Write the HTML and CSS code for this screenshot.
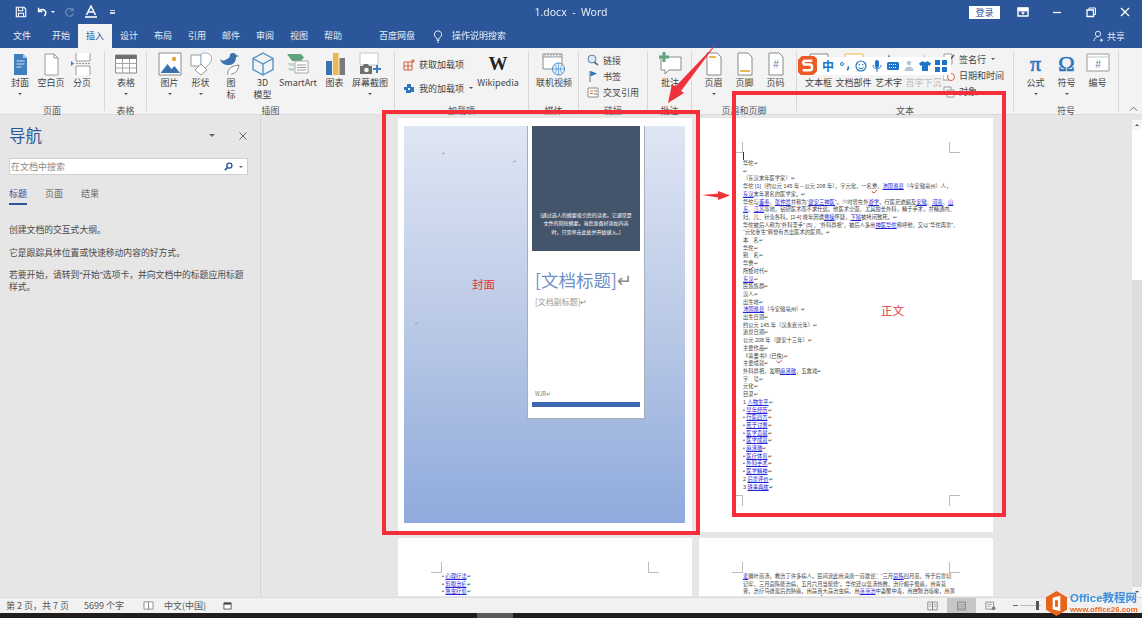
FILE: index.html
```html
<!DOCTYPE html>
<html lang="zh-CN">
<head>
<meta charset="utf-8">
<title>1.docx - Word</title>
<link rel="stylesheet" href="styles.css">
</head>
<body>
<div class="app">
  <header class="titlebar">
    <div class="qat">
      <svg class="qi" viewBox="0 0 14 14"><path d="M1.5 1.5h9l2 2v9h-11z" fill="none" stroke="#fff" stroke-width="1.3"/><path d="M4 2v3.5h5V2M4 12.5V8.500h6v4" fill="none" stroke="#fff" stroke-width="1.2"/></svg>
      <svg class="qi undo" viewBox="0 0 14 14"><path d="M3 2v4.5h4.5M3.2 6.3C5 3.800 8.500 3.400 10.500 5.500c1.600 1.800 1.200 4.500-1 6" fill="none" stroke="#fff" stroke-width="1.7"/></svg>
      <span class="qcaret"></span>
      <svg class="qi redo" viewBox="0 0 14 14"><path d="M11 3.500A5 5 0 1 0 12 8M11.500 1v3.500H8" fill="none" stroke="#6f8cba" stroke-width="1.5"/></svg>
      <svg class="qi font" viewBox="0 0 14 14"><path d="M2.500 10L7 1l4.500 9M4.300 7h5.400" fill="none" stroke="#fff" stroke-width="1.5"/><path d="M1 12h12" stroke="#fff" stroke-width="1.6"/></svg>
      <span class="qmore"></span>
    </div>
    <div class="doc-title">1.docx&nbsp; -&nbsp; Word</div>
    <div class="winctl">
      <span class="login">登录</span>
      <svg class="wi" viewBox="0 0 12 12"><path d="M1 2h10v8H1z" fill="none" stroke="#fff" stroke-width="1.4"/><path d="M1 2h10v3H1zM6 4v4M4.300 6.500L6 8.300l1.700-1.800" fill="#fff" stroke="#fff" stroke-width=".8"/></svg>
      <svg class="wi" viewBox="0 0 12 12"><path d="M2 6.500h8" stroke="#fff" stroke-width="1.3"/></svg>
      <svg class="wi" viewBox="0 0 12 12"><path d="M2 4h6.500v6.500H2z" fill="none" stroke="#fff" stroke-width="1.3"/><path d="M4 3.500V2h6.500v6.500H9" fill="none" stroke="#fff" stroke-width="1"/></svg>
      <svg class="wi" viewBox="0 0 12 12"><path d="M2 2l8 8M10 2l-8 8" stroke="#fff" stroke-width="1.3"/></svg>
    </div>
  </header>

  <nav class="tabs">
    <span class="tab first">文件</span><span class="tab">开始</span><span class="tab active">插入</span><span class="tab">设计</span><span class="tab">布局</span><span class="tab">引用</span><span class="tab">邮件</span><span class="tab">审阅</span><span class="tab">视图</span><span class="tab">帮助</span>
    <span class="tab baidu">百度网盘</span>
    <svg class="bulb" viewBox="0 0 12 16"><path d="M6 1a4.500 4.500 0 0 0-2.400 8.300c.6.500.9 1.200.9 2h3c0-.8.300-1.500.9-2A4.500 4.500 0 0 0 6 1zM4.500 13h3M5 15h2" fill="none" stroke="#fff" stroke-width="1.1"/></svg>
    <span class="tab search">操作说明搜索</span>
    <span class="share">
      <svg class="share-i" viewBox="0 0 12 14"><circle cx="6" cy="4.500" r="3.200" fill="none" stroke="#fff" stroke-width="1"/><path d="M1 13c.5-3 2.200-4.600 4.500-5M8 12h4M10 10v4" fill="none" stroke="#fff" stroke-width="1"/></svg>共享
    </span>
  </nav>

  <section class="ribbon">
    <div class="group g1">
      <div class="gbody">
        <div class="item w30"><svg class="ico" viewBox="0 0 24 24"><path d="M6 2h9l4 4v17H6z" fill="#3e7fc1"/><path d="M15 2v4h4" fill="#a9c8e8"/><path d="M8.500 9h8M8.500 12h8M8.500 15h5" stroke="#cfe0f2" stroke-width="1"/></svg><span>封面</span><i class="caret"></i></div>
        <div class="item w32"><svg class="ico" viewBox="0 0 24 24"><path d="M6 2h9l4 4v17H6z" fill="#fff" stroke="#9a9a9a"/><path d="M15 2v4h4" fill="none" stroke="#9a9a9a"/></svg><span>空白页</span></div>
        <div class="item w30"><svg class="ico" viewBox="0 0 24 24"><path d="M6 1v8h14V1M6 23v-9h14v9" fill="#fff" stroke="#9a9a9a"/><path d="M1 9l3 2.500L1 14z" fill="#3e7fc1"/><path d="M6 11.500h14" stroke="#9a9a9a" stroke-dasharray="2 1"/></svg><span>分页</span></div>
      </div>
      <div class="glabel">页面</div>
    </div>
    <div class="group g2">
      <div class="gbody">
        <div class="item w42"><svg class="ico" viewBox="0 0 24 24"><path d="M1.500 3h21v18h-21z" fill="#fff" stroke="#8a8a8a"/><path d="M1.500 3h21v4h-21z" fill="#6f6f6f"/><path d="M1.500 11.500h21M1.500 16h21M8.500 7v14M15.500 7v14" stroke="#a8a8a8"/></svg><span>表格</span><i class="caret"></i></div>
      </div>
      <div class="glabel">表格</div>
    </div>
    <div class="group g3">
      <div class="gbody">
        <div class="item w31"><svg class="ico" viewBox="0 0 24 24"><path d="M1 1h22v22H1z" fill="#fff" stroke="#8a8a8a"/><path d="M2.500 21l7-9 4 5 3-3 5.500 7z" fill="#3a72ad"/><circle cx="16" cy="7" r="2.200" fill="#e9a23b"/></svg><span>图片</span><i class="caret"></i></div>
        <div class="item w31"><svg class="ico" viewBox="0 0 24 24"><path d="M2 3h10v11H2z" fill="#fff" stroke="#9a9a9a"/><path d="M12 2c3-2 8-1 10 2 2 4-1 8-6 12l-4-3z" fill="#fff" stroke="#8fb2d4"/><path d="M12 12l6 6-6 5-6-5z" fill="#fff" stroke="#9a9a9a"/></svg><span>形状</span><i class="caret"></i></div>
        <div class="item w30"><svg class="ico" viewBox="0 0 24 24"><path d="M1 7c3 3 5 1 7 0 2-1 3-2 3-4 0-2 5-3 6 0l3 1-3 1c0 5-3 8-7 8-5 0-8-2-9-6z" fill="#3a72ad"/><path d="M9 23c-1-4 1-9 11-10-1 6-4 9-8 9" fill="#fff" stroke="#8a8a8a"/></svg><span>图<br>标</span></div>
        <div class="item w33"><svg class="ico" viewBox="0 0 24 24"><path d="M12 1l10 5.500v11L12 23 2 17.500v-11zM2 6.500L12 12l10-5.500M12 12v11" fill="none" stroke="#4a90c8" stroke-width="1.3"/></svg><span>3D<br>模型</span></div>
        <div class="item w38"><svg class="ico" viewBox="0 0 24 24"><path d="M1 2h14l3 3.500-3 3.500H6z" fill="#5ea57e"/><path d="M9 9h13v12H9z" fill="#fff" stroke="#a8a8a8"/><path d="M11 13h9M11 15.500h9M11 18h9" stroke="#9a9a9a"/><path d="M1 11h7v3H4zM1 16h7v3H4z" fill="#bcd8c8"/></svg><span>SmartArt</span></div>
        <div class="item w35"><svg class="ico" viewBox="0 0 24 24"><path d="M3 9h6v14H3z" fill="#3a72ad"/><path d="M10 1h5.500v22H10z" fill="#e9b84f"/><path d="M16.500 6H22v17h-5.500z" fill="#7a7a7a"/></svg><span>图表</span></div>
        <div class="item w36"><svg class="ico" viewBox="0 0 24 24"><path d="M2 1h18v12H2z" fill="#fff" stroke="#c8c8c8"/><path d="M2 14h3l1-2h4l1 2h3v8H2z" fill="#6f6f6f"/><circle cx="8.500" cy="18" r="2.300" fill="#f3f3f3"/><path d="M19 13v8M15 17h8" stroke="#3e7fc1" stroke-width="2"/></svg><span>屏幕截图</span><i class="caret"></i></div>
      </div>
      <div class="glabel">插图</div>
    </div>
    <div class="group g4">
      <div class="gbody addins">
        <div class="rows">
          <div class="row tall"><svg class="sico" viewBox="0 0 12 12"><path d="M1 3h8v8H1zM1 7h8M5 3v8" fill="none" stroke="#d2603a" stroke-width="1"/><path d="M10 0v4M8 2h4" stroke="#d2603a" stroke-width="1"/></svg><span>获取加载项</span></div>
          <div class="row tall"><svg class="sico" viewBox="0 0 12 12"><path d="M1 5h4v3H1zM4 2h4v4H4zM7 5h4v5H7zM3 8h5v3H3z" fill="#2f74bd"/></svg><span>我的加载项</span><i class="caret inline"></i></div>
        </div>
        <div class="item wiki"><span class="w-logo">W</span><span>Wikipedia</span></div>
      </div>
      <div class="glabel">加载项</div>
    </div>
    <div class="group g5">
      <div class="gbody">
        <div class="item w50"><svg class="ico" viewBox="0 0 24 24"><path d="M1 2h19v15H1z" fill="#fff" stroke="#8a8a8a"/><path d="M1 5h19M3 2v3M6 2v3M9 2v3M12 2v3M15 2v3M18 2v3" stroke="#8a8a8a" stroke-width=".8"/><circle cx="16.500" cy="17" r="6" fill="#eaf2fa" stroke="#4a90c8"/><path d="M10.500 17h12M16.500 11v12M13 12.500c2 3 2 6 0 9M20 12.500c-2 3-2 6 0 9" fill="none" stroke="#4a90c8" stroke-width=".7"/></svg><span>联机视频</span></div>
      </div>
      <div class="glabel">媒体</div>
    </div>
    <div class="group g6">
      <div class="gbody">
        <div class="rows links">
          <div class="row"><svg class="sico" viewBox="0 0 12 12"><circle cx="5" cy="5" r="4" fill="#dce8f4" stroke="#5a86b0"/><path d="M7 8l4 3" stroke="#6f6f6f" stroke-width="1.6"/></svg><span>链接</span></div>
          <div class="row"><svg class="sico" viewBox="0 0 12 12"><path d="M3 1v11" stroke="#6f6f6f"/><path d="M3.500 1L10 3.500 3.500 6.500z" fill="#2f74bd"/></svg><span>书签</span></div>
          <div class="row"><svg class="sico" viewBox="0 0 12 12"><path d="M1 2h10v9H1z" fill="#fff" stroke="#8a8a8a"/><path d="M3 5h3M3 7.500h3" stroke="#d2603a"/><path d="M7 5h3M7 8h3" stroke="#6f6f6f"/></svg><span>交叉引用</span></div>
        </div>
      </div>
      <div class="glabel">链接</div>
    </div>
    <div class="group g7">
      <div class="gbody">
        <div class="item w44"><svg class="ico" viewBox="0 0 24 24"><path d="M3 5h20v13H11l-4 4v-4H3z" fill="#fff" stroke="#8a8a8a"/><path d="M1 5h10M6 0v10" stroke="#5ea57e" stroke-width="3"/></svg><span>批注</span></div>
      </div>
      <div class="glabel">批注</div>
    </div>
    <div class="group g8">
      <div class="gbody">
        <div class="item w31"><svg class="ico" viewBox="0 0 24 24"><path d="M5 1h10l4 4v18H5z" fill="#fff" stroke="#8a8a8a"/><path d="M7 5h7" stroke="#e9b84f" stroke-width="2"/></svg><span>页眉</span><i class="caret"></i></div>
        <div class="item w31"><svg class="ico" viewBox="0 0 24 24"><path d="M5 1h10l4 4v18H5z" fill="#fff" stroke="#8a8a8a"/><path d="M7 19h10" stroke="#e9b84f" stroke-width="2"/></svg><span>页脚</span><i class="caret"></i></div>
        <div class="item w31"><svg class="ico" viewBox="0 0 24 24"><path d="M5 1h10l4 4v18H5z" fill="#fff" stroke="#8a8a8a"/><text x="12" y="16" class="hash">#</text></svg><span>页码</span><i class="caret"></i></div>
      </div>
      <div class="glabel">页眉和页脚</div>
    </div>
    <div class="group g9">
      <div class="gbody">
        <div class="item w35"><svg class="ico" viewBox="0 0 24 24"><path d="M3 2h18v20H3z" fill="#fff" stroke="#8a8a8a"/></svg><span>文本框</span><i class="caret"></i></div>
        <div class="item w35"><svg class="ico" viewBox="0 0 24 24"><path d="M3 2h18v20H3z" fill="#fff" stroke="#e9b84f"/></svg><span>文档部件</span><i class="caret"></i></div>
        <div class="item w35"><svg class="ico" viewBox="0 0 24 24"><path d="M8 14L12 2l4 12z" fill="#3e7fc1"/></svg><span>艺术字</span><i class="caret"></i></div>
        <div class="item w35 muted"><svg class="ico" viewBox="0 0 24 24"><path d="M8 14L12 2l4 12z" fill="#c8c8c8"/></svg><span>首字下沉</span><i class="caret"></i></div>
        <div class="rows sign">
          <div class="row"><svg class="sico" viewBox="0 0 12 12"><path d="M1 1h8v10H1z" fill="#fff" stroke="#9a9a9a"/><path d="M5 9L11 2" stroke="#555" stroke-width="1.3"/></svg><span>签名行</span><i class="caret inline"></i></div>
          <div class="row"><svg class="sico" viewBox="0 0 12 12"><path d="M0 4h8v7H0z" fill="#fff" stroke="#9a9a9a"/><circle cx="8" cy="8" r="3.500" fill="#fff" stroke="#d2603a"/></svg><span>日期和时间</span></div>
          <div class="row"><svg class="sico" viewBox="0 0 12 12"><path d="M1 1h7v7H1z" fill="#fff" stroke="#9a9a9a"/><path d="M4 4h7v7H4z" fill="#fff" stroke="#9a9a9a"/></svg><span>对象</span><i class="caret inline"></i></div>
        </div>
      </div>
      <div class="glabel">文本</div>
    </div>
    <div class="group g10">
      <div class="gbody">
        <div class="item w31"><span class="big-sym">π</span><span>公式</span><i class="caret"></i></div>
        <div class="item w31"><span class="big-sym">Ω</span><span>符号</span><i class="caret"></i></div>
        <div class="item w31"><svg class="ico" viewBox="0 0 24 24"><path d="M1 2h22v17H1z" fill="#fff" stroke="#9a9a9a"/><path d="M1 5h22" stroke="#c8c8c8"/><text x="12" y="16" class="hash">#</text></svg><span>编号</span></div>
      </div>
      <div class="glabel">符号</div>
    </div>
    <div class="collapse"><svg viewBox="0 0 10 6"><path d="M1 5l4-4 4 4" fill="none" stroke="#666" stroke-width="1"/></svg></div>
  </section>

  <main class="workspace">
    <aside class="navpane">
      <div class="nav-head"><h2>导航</h2><i class="nav-caret"></i><svg class="nav-x" viewBox="0 0 8 8"><path d="M.5.500l7 7M7.500.500l-7 7" stroke="#666" stroke-width="1"/></svg></div>
      <div class="nav-search"><span>在文档中搜索</span><svg class="nav-mag" viewBox="0 0 10 10"><circle cx="6" cy="4" r="2.800" fill="none" stroke="#2b579a" stroke-width="1.5"/><path d="M4 6L1 9" stroke="#2b579a" stroke-width="1.8"/></svg><i class="tiny-caret"></i></div>
      <div class="nav-tabs"><span class="on">标题</span><span>页面</span><span>结果</span></div>
      <p>创建文档的交互式大纲。</p>
      <p>它是跟踪具体位置或快速移动内容的好方式。</p>
      <p>若要开始，请转到“开始”选项卡，并向文档中的标题应用标题样式。</p>
    </aside>
    <div class="docarea">
      <div class="pages">
        <article class="page cover">
          <div class="cover-bg">
            <i class="speck s1"></i><i class="speck s2"></i><i class="speck s3"></i>
            <div class="cover-card">
              <div class="cover-dark"><p>[通过选人的摘要吸引您的读者。它通常是文件的简短摘要。当您准备好添加内容时，只需单击此处并开始键入。]</p></div>
              <div class="cover-title">[文档标题]<em>↵</em></div>
              <div class="cover-sub">[文档副标题]<em>↵</em></div>
              <div class="cover-foot">
                <div class="cover-author">WJR↵</div>
                <div class="cover-bar"></div>
              </div>
            </div>
          </div>
        </article>
        <article class="page body-page">
          <i class="mark tl"></i><i class="mark tr"></i><i class="mark bl"></i><i class="mark br"></i>
          <div class="text">
            <div class="cursor"></div>
            <div>华佗↵</div>
            <div>↵</div>
            <div>（东汉末年医学家）↵</div>
            <div>华佗 [1]（约公元 145 年－公元 208 年），字元化，一名<u class="err">旉</u>，<a>沛国谯县</a>（今安徽亳州）人，</div>
            <div><a>东汉</a>末年著名的医学家。↵</div>
            <div>华佗与<a>董奉</a>、<a>张仲景</a>并称为“<a>建安三神医</a>”。少时曾在外<a>游学</a>，行医足迹遍及<a>安徽</a>、<a>河南</a>、<a>山</a></div>
            <div><a>东</a>、<a>江苏</a>等地，钻研医术而不求仕途。他医术全面，尤其擅长外科，精于手术，并精通内、</div>
            <div>妇、儿、针灸各科。[2-4] 晚年因遭<a>曹操</a>怀疑，<a>下狱</a>被拷问致死。↵</div>
            <div>华佗被后人称为“外科圣手” [5] 、“外科鼻祖”，被后人多用<a>神医华佗</a>称呼他，又以“华佗再世”、</div>
            <div>“元化重生”称誉有杰出医术的医师。↵</div>
            <div>本　名↵</div>
            <div>华佗↵</div>
            <div>别　名↵</div>
            <div>华<u class="err">旉</u>↵</div>
            <div>所处时代↵</div>
            <div><a>东汉</a>↵</div>
            <div>民族族群↵</div>
            <div>汉人↵</div>
            <div>出生地↵</div>
            <div><a>沛国谯县</a>（今安徽亳州）↵</div>
            <div>出生日期↵</div>
            <div>约公元 145 年（汉永嘉元年）↵</div>
            <div>逝世日期↵</div>
            <div>公元 208 年（建安十三年）↵</div>
            <div>主要作品↵</div>
            <div>《青囊书》(已<u class="err">佚</u>)↵</div>
            <div>主要成就↵</div>
            <div>外科鼻祖，发明<a>麻沸散</a>，五禽戏↵</div>
            <div>字　号↵</div>
            <div>元化↵</div>
            <div>目录↵</div>
            <div class="li">1 <a>人物生平</a>↵</div>
            <div class="li">• <a>早年经历</a>↵</div>
            <div class="li">• <a>行医四方</a>↵</div>
            <div class="li">• <a>死于讨曹</a>↵</div>
            <div class="li">• <a>医学贡献</a>↵</div>
            <div class="li">• <a>医学成就</a>↵</div>
            <div class="li">• <a>麻沸散</a>↵</div>
            <div class="li">• <a>医疗体育</a>↵</div>
            <div class="li">• <a>外科手术</a>↵</div>
            <div class="li">• <a>医学精神</a>↵</div>
            <div class="li">2 <a>后世评价</a>↵</div>
            <div class="li">3 <a>轶事典故</a>↵</div>
          </div>
        </article>
        <article class="page lower">
          <i class="mark tl"></i><i class="mark tr"></i>
          <div class="text">
            <div class="li">• <a>心理疗法</a>↵</div>
            <div class="li">• <a>剪眼治疟</a>↵</div>
            <div class="li">• <a>熟虫疗愈</a>↵</div>
          </div>
        </article>
        <article class="page lower">
          <i class="mark tl"></i><i class="mark tr"></i>
          <div class="text">
            <div><a>麦</a>嫩叶煎汤，救治了许多病人。民间流此用清唐一首歌谣：“三月<a>茵陈</a>四月蒿，传于后世切</div>
            <div>记牢，三月茵陈能治病，五月六月当柴烧”。华佗还以温汤热敷，治疗蝎子<u class="err">螫</u>痛，用青苔</div>
            <div>膏，治疗马蜂蜇后的肿痛，用蒜<u class="err">苗</u>大蒜治虫病，用<a>蒸蒸治</a>中蛊蟹中毒，用白前治咳嗽，用黄</div>
          </div>
        </article>
      </div>
      <div class="scrollbar"><span class="sb-up"></span><span class="sb-thumb"></span><span class="sb-down"></span></div>
    </div>
  </main>

  <footer class="status">
    <span class="st pagecount">第 2 页，共 7 页</span>
    <span class="st">5699 个字</span>
    <svg class="st-i book" viewBox="0 0 12 10"><path d="M1 1h5v8H1zM6 1h5v8H6z" fill="#fff" stroke="#888"/></svg>
    <span class="st">中文(中国)</span>
    <svg class="st-i cal" viewBox="0 0 10 10"><path d="M1 2h8v7H1z" fill="#fff" stroke="#555"/><path d="M1 2h8v2H1z" fill="#444"/></svg>
    <div class="views">
      <svg class="v-i" viewBox="0 0 14 12"><path d="M1 1h6v10H1zM7 1h6v10H7z" fill="none" stroke="#7a7a7a"/><path d="M2.500 4h3M2.500 6.500h3M8.500 4h3M8.500 6.500h3" stroke="#9a9a9a"/></svg>
      <span class="v-on"><svg class="v-i" viewBox="0 0 14 12"><path d="M2 1h10v10H2z" fill="none" stroke="#7a7a7a"/><path d="M2 4h10M2 6.500h10M2 9h10" stroke="#9a9a9a"/></svg></span>
      <svg class="v-i" viewBox="0 0 14 12"><path d="M1 1h10v9H1z" fill="none" stroke="#7a7a7a"/><path d="M3 4h6M3 6.500h4" stroke="#9a9a9a"/><circle cx="11" cy="9" r="2.300" fill="#7a7a7a"/></svg>
      <span class="zoom-minus"></span>
      <span class="zoom-track"><i></i></span>
    </div>
  </footer>
  <div class="taskbar"><span></span></div>

  <div class="note box-cover"></div>
  <div class="note box-body"></div>
  <span class="note-label lb-cover">封面</span>
  <span class="note-label lb-body">正文</span>
  <svg class="note-svg" viewBox="0 0 1142 618"><path d="M717 43L681 91 675 87z" fill="#f0323c"/><path d="M668 103L672 84 684 93z" fill="#f0323c"/><path d="M702 195L718 193.500V191L730 195.500 718 200V197.500z" fill="#f0323c"/></svg>

  <div class="sogou">
    <svg class="sg-logo" viewBox="0 0 20 20"><path d="M4 0h13l3 3v13l-4 4H3l-3-3V4z" fill="#ee5a24"/><path d="M15 5H7.500C5 5 5 9 7.500 9h5c3 0 3 6 0 6H5" fill="none" stroke="#fff" stroke-width="2.6"/></svg>
    <span class="sg-zh">中</span>
    <svg class="sg-i" viewBox="0 0 12 12"><circle cx="3" cy="4" r="1.500" fill="none" stroke="#1e74c8"/><path d="M9 6.500c.8 1 .3 2.500-1 3.500" fill="none" stroke="#1e74c8" stroke-width="1.6"/></svg>
    <svg class="sg-i" viewBox="0 0 12 12"><circle cx="6" cy="6" r="5" fill="none" stroke="#1e74c8" stroke-width="1.2"/><circle cx="4.300" cy="4.800" r=".8" fill="#1e74c8"/><circle cx="7.700" cy="4.800" r=".8" fill="#1e74c8"/><path d="M3.500 7.500c1.300 1.600 3.700 1.600 5 0" fill="none" stroke="#1e74c8"/></svg>
    <svg class="sg-i" viewBox="0 0 12 12"><rect x="4" y="0" width="4" height="8" rx="2" fill="#1e74c8"/><path d="M2 5c0 5 8 5 8 0M6 9v3" fill="none" stroke="#1e74c8"/></svg>
    <svg class="sg-i" viewBox="0 0 12 12"><rect x="0" y="2" width="12" height="8" rx="1.500" fill="#1e74c8"/><path d="M2 4.500h8M2 7.500h8" stroke="#fff" stroke-dasharray="1 1"/></svg>
    <svg class="sg-i" viewBox="0 0 12 12"><circle cx="6" cy="3" r="2.200" fill="#b6c6d4"/><path d="M1.500 11c0-6 9-6 9 0z" fill="#b6c6d4"/></svg>
    <svg class="sg-i" viewBox="0 0 12 12"><path d="M3.500 1L0 3.500 1.500 6 3 5v6h6V5l1.500 1L12 3.500 8.500 1C8 2.500 4 2.500 3.500 1z" fill="#1e74c8"/></svg>
    <svg class="sg-i" viewBox="0 0 12 12"><path d="M0 0h5v5H0zM7 0h5v5H7zM0 7h5v5H0zM7 7h5v5H7z" fill="#1e74c8"/></svg>
  </div>

  <div class="watermark">
    <svg class="wm-logo" viewBox="0 0 22 26"><path d="M11 0l11 6.500v13L11 26 0 19.500v-13z" fill="#e8641b"/><path d="M7 7l8-2v16l-8-2z" fill="#fff"/><path d="M9.500 9.500h3v7h-3z" fill="#e8641b"/></svg>
    <div class="wm-text"><b>Office教程网</b><span>www.office26.com</span></div>
  </div>
</div>
</body>
</html>
```

FILE: styles.css
```css
* { box-sizing: border-box; }
html, body { margin: 0; height: 100%; overflow: hidden; }
body { font-family: "Noto Sans CJK SC", "Liberation Sans", sans-serif; color: #444; background: #e6e6e6; }
.app { position: relative; width: 1142px; height: 618px; display: flex; flex-direction: column; overflow: hidden; filter: blur(0.3px); }

/* title bar */
.titlebar { height: 24px; background: #2b579a; display: flex; align-items: center; position: relative; color: #fff; }
.qat { display: flex; align-items: center; padding-left: 15px; width: 400px; }
.qi { width: 12px; height: 12px; flex: none; }
.undo { margin-left: 9px; }
.qcaret { width: 0; height: 0; margin-left: 3px; border: 2px solid transparent; border-top: 2px solid #fff; margin-top: 2px; }
.redo { margin-left: 9px; width: 11px; height: 11px; }
.font { margin-left: 9px; width: 14px; height: 14px; }
.qmore { width: 5px; height: 4px; margin-left: 12px; border-top: 1px solid #cfd9ea; border-bottom: 2px solid #cfd9ea; }
.doc-title { position: absolute; left: 400px; width: 342px; text-align: center; font: 10.5px/24px "Noto Sans", sans-serif; color: #e6ecf5; }
.winctl { margin-left: auto; display: flex; align-items: center; }
.login { width: 31px; height: 13px; background: #fff; color: #2b579a; font-size: 9px; line-height: 13px; text-align: center; margin-right: 17px; }
.wi { width: 12px; height: 12px; margin-right: 22px; }
.wi:last-child { margin-right: 11px; }

/* tabs */
.tabs { height: 24px; background: #2b579a; display: flex; align-items: center; color: #e8edf5; font-size: 9px; position: relative; }
.tab { width: 34px; text-align: center; line-height: 23px; height: 24px; flex: none; }
.tab.first { width: 44px; }
.tab.active { background: #f3f3f3; color: #2b579a; }
.baidu { width: 42px; margin-left: 26px; }
.search { width: 56px; margin-left: 8px; }
.bulb { width: 10px; height: 13px; margin-left: 15px; flex: none; }
.share { margin-left: auto; margin-right: 17px; display: flex; align-items: center; gap: 4px; }
.share-i { width: 10px; height: 12px; }

/* ribbon */
.ribbon { height: 67px; background: #f3f3f3; display: flex; border-bottom: 1px solid #dcdcdc; position: relative; padding-top: 3px; }
.group { display: flex; flex-direction: column; border-right: 1px solid #d8d8d8; height: 60px; flex: none; }
.gbody { display: flex; height: 49px; flex: none; padding-top: 1px; }
.glabel { font-size: 9px; line-height: 11px; text-align: center; color: #555; margin-top: 5px; }
.g1 { width: 105px; } .g1 .gbody { padding-left: 5px; }
.g2 { width: 42px; }
.g3 { width: 248px; } .g3 .gbody { padding-left: 7px; }
.g4 { width: 134px; }
.g5 { width: 50px; }
.g6 { width: 69px; }
.g7 { width: 44px; }
.g8 { width: 105px; } .g8 .gbody { padding-left: 6px; }
.g9 { width: 217px; } .g9 .gbody { padding-left: 4px; }
.g10 { width: 105px; } .g10 .gbody { padding-left: 6px; }
.item { display: flex; flex-direction: column; align-items: center; font-size: 9px; line-height: 12px; color: #444; flex: none; text-align: center; }
.item > span:not(.w-logo):not(.big-sym) { margin-top: 1px; white-space: nowrap; }
.ico { width: 24px; height: 24px; display: block; flex: none; }
.caret { display: block; width: 0; height: 0; margin-top: 4px; border: 2px solid transparent; border-top: 2px solid #555; }
.caret.inline { margin: 2px 0 0 5px; }
.w30 { width: 30px; } .w31 { width: 31px; } .w32 { width: 32px; } .w33 { width: 33px; } .w35 { width: 35px; }
.w36 { width: 36px; } .w38 { width: 38px; } .w42 { width: 42px; } .w44 { width: 44px; } .w50 { width: 50px; }
.muted { color: #bbb; }
.rows { display: flex; flex-direction: column; font-size: 9px; color: #444; flex: none; }
.row { display: flex; align-items: center; height: 17px; white-space: nowrap; }
.row.tall { height: 24px; }
.sico { width: 12px; height: 12px; margin-right: 4px; flex: none; }
.addins { padding-left: 8px; }
.addins .rows { width: 72px; padding-top: 1px; }
.wiki { width: 46px; }
.w-logo { font: bold 19px/24px "Liberation Serif", serif; color: #222; height: 24px; }
.links { padding: 0 0 0 8px; margin-top: 0; }
.sign { margin-left: 2px; margin-top: -1px; }
.sign .row { height: 17.5px; }
.big-sym { font: 22px/24px "Liberation Serif", serif; -webkit-text-stroke: 0.6px #2f74bd; color: #2f74bd; height: 24px; }
.hash { font: 10px "Liberation Sans", sans-serif; fill: #5a86b0; text-anchor: middle; }
.collapse { position: absolute; right: 4px; bottom: 2px; width: 9px; height: 6px; display: flex; }
.collapse svg { width: 9px; height: 6px; }

/* workspace */
.workspace { height: 482px; display: flex; flex: none; }
.navpane { width: 261px; flex: none; background: #e6e6e6; border-right: 1px solid #d4d4d4; padding: 0 12px 0 9px; }
.nav-head { display: flex; align-items: center; height: 41px; }
.nav-head h2 { margin: 0; font-size: 16.5px; font-weight: 400; color: #2b579a; line-height: 41px; }
.nav-caret { width: 0; height: 0; margin-left: auto; border: 3px solid transparent; border-top: 3px solid #666; margin-top: 3px; }
.nav-x { width: 8px; height: 8px; margin-left: 24px; margin-right: 1px; }
.nav-search { height: 17px; margin-top: 2px; background: #fff; border: 1px solid #cfcfcf; display: flex; align-items: center; font-size: 9px; color: #8a8a8a; padding: 0 4px 0 1px; }
.nav-mag { width: 9px; height: 9px; margin-left: auto; }
.tiny-caret { width: 0; height: 0; margin-left: 6px; margin-top: 2px; border: 2px solid transparent; border-top: 2px solid #666; }
.nav-tabs { display: flex; gap: 18px; font-size: 9px; margin-top: 12px; color: #666; height: 18px; line-height: 14px; }
.nav-tabs .on { color: #2b579a; border-bottom: 2px solid #2b579a; height: 18px; }
.navpane p { margin: 0 0 11px; font-family: "Liberation Sans", "Noto Sans CJK SC", sans-serif; font-size: 8.8px; line-height: 11.5px; color: #4a4a4a; }
.navpane .nav-tabs + p { margin-top: 20px; }
.docarea { flex: 1; display: flex; justify-content: space-between; padding-left: 137px; background: #e6e6e6; overflow: hidden; }
.pages { display: grid; grid-template-columns: 294px 294px; column-gap: 7px; row-gap: 6px; align-content: start; padding-top: 3px; width: 595px; }
.page { background: #fff; position: relative; }
.cover { height: 414px; padding: 8px 7px 9px 6px; }
.cover-bg { height: 397px; background: linear-gradient(#dfe6f4, #bac9e6 50%, #8faadc); position: relative; display: flex; justify-content: flex-end; padding-right: 40px; align-items: flex-start; }
.speck { position: absolute; width: 3px; height: 1px; background: #9aa6ba; transform: rotate(-30deg); }
.s1 { left: 38px; top: 27px; }
.s2 { left: 109px; top: 35px; }
.s3 { left: 11px; top: 197px; }
.cover-card { width: 118px; height: 293px; background: #fff; border: 1px solid #a8aeb8; border-top: 0; padding: 0 4px; display: flex; flex-direction: column; }
.cover-dark { height: 125px; background: #44546a; display: flex; align-items: flex-end; padding: 0 8px 15px; flex: none; }
.cover-dark p { margin: 0; font-size: 5px; line-height: 8.5px; color: #fff; text-align: center; }
.cover-title { margin-top: 16px; font-size: 17.5px; line-height: 26px; color: #6f8fc9; white-space: nowrap; padding-left: 3px; }
.cover-title em, .cover-sub em { font-style: normal; color: #888; }
.cover-sub { margin-top: 3px; font-size: 8px; line-height: 12px; color: #999; padding-left: 3px; }
.cover-foot { margin-top: auto; padding-bottom: 11px; }
.cover-author { font-size: 5.5px; line-height: 8px; color: #777; padding-left: 3px; margin-bottom: 4px; }
.cover-bar { height: 5px; background: #3d66b3; }
.body-page { height: 414px; padding: 34px 40px 0 44px; }
.mark { position: absolute; width: 11px; height: 11px; border: 0 solid #bcbcbc; }
.tl { left: 33px; top: 24px; border-width: 0 1px 1px 0; }
.tr { right: 33px; top: 24px; border-width: 0 0 1px 1px; }
.bl { left: 33px; bottom: 26px; border-width: 1px 1px 0 0; }
.br { right: 33px; bottom: 26px; border-width: 1px 0 0 1px; }
.text { font-family: "Liberation Sans", "Noto Sans CJK SC", sans-serif; font-size: 5.3px; line-height: 7.7px; color: #444; white-space: nowrap; }
.text a { color: #2323d8; text-decoration: underline; }
.text .err { text-decoration: underline wavy #d83030; }
.cursor { height: 8px; width: 1px; background: #333; }
.lower { height: 58px; padding: 35px 40px 0 44px; overflow: hidden; }
.scrollbar { width: 10px; flex: none; margin-left: auto; background: #ddd; display: flex; flex-direction: column; margin-top: 5px; height: 477px; }
.sb-up, .sb-down { height: 10px; background: #f6f6f6; flex: none; position: relative; }
.sb-up::after, .sb-down::after { content: ""; position: absolute; left: 3px; border: 2px solid transparent; }
.sb-up::after { top: 2px; border-bottom: 2px solid #555; }
.sb-down::after { top: 4px; border-top: 2px solid #555; }
.sb-thumb { height: 150px; background: #fff; flex: none; }
.sb-down { margin-top: auto; }

/* status */
.status { height: 16px; flex: none; background: #f1f1f1; border-top: 1px solid #dcdcdc; display: flex; align-items: center; font-size: 9px; color: #555; padding-left: 6px; }
.st { white-space: nowrap; }
.pagecount { margin-right: 15px; }
.st-i { flex: none; }
.book { width: 11px; height: 9px; margin: 0 10px 0 19px; }
.cal { width: 9px; height: 9px; margin-left: 17px; }
.views { margin-left: auto; display: flex; align-items: center; height: 15px; padding-right: 101px; }
.v-i { width: 11px; height: 10px; flex: none; }
.v-on { width: 29px; height: 15px; background: #c6c6c6; display: flex; align-items: center; justify-content: center; margin: 0 9px; }
.zoom-minus { width: 5px; height: 1px; background: #666; margin: 0 2px 0 17px; }
.zoom-track { width: 21px; height: 1px; background: #bbb; position: relative; }
.zoom-track i { position: absolute; left: 16px; top: -4px; width: 3px; height: 9px; background: #555; }
.taskbar { height: 5px; flex: none; background: #201d1c; display: flex; padding-left: 477px; }
.taskbar span { width: 36px; background: #5c5a58; }

/* overlays */
.note { position: absolute; border: 4px solid #f52f38; pointer-events: none; }
.box-cover { left: 382px; top: 110px; width: 318px; height: 425px; }
.box-body { left: 732px; top: 91px; width: 274px; height: 426px; }
.note-label { position: absolute; color: #e8323a; font-size: 11.5px; line-height: 14px; }
.lb-cover { left: 472px; top: 277px; }
.lb-body { left: 881px; top: 303px; }
.note-svg { position: absolute; left: 0; top: 0; width: 1142px; height: 618px; pointer-events: none; }
.sogou { position: absolute; left: 798px; top: 57px; width: 153px; height: 18px; background: #fff; display: flex; align-items: center; gap: 4px; padding-left: 24px; }
.sg-logo { position: absolute; left: -1px; top: -1px; width: 21px; height: 19px; }
.sg-zh { color: #1e74c8; font-size: 12px; font-weight: 700; line-height: 14px; width: 12px; margin-right: 1px; }
.sg-i { width: 12px; height: 12px; flex: none; }
.watermark { position: absolute; left: 1046px; top: 590px; display: flex; align-items: center; gap: 3px; height: 26px; }
.wm-logo { width: 21px; height: 25px; flex: none; }
.wm-text { display: flex; flex-direction: column; width: 70px; white-space: nowrap; }
.wm-text b { font: 700 11.5px/14px "Liberation Sans", "Noto Sans CJK SC", sans-serif; color: #3d8fe0; }
.wm-text span { font: 700 7.8px/10px "Liberation Sans", sans-serif; color: #e8641b; }
```
